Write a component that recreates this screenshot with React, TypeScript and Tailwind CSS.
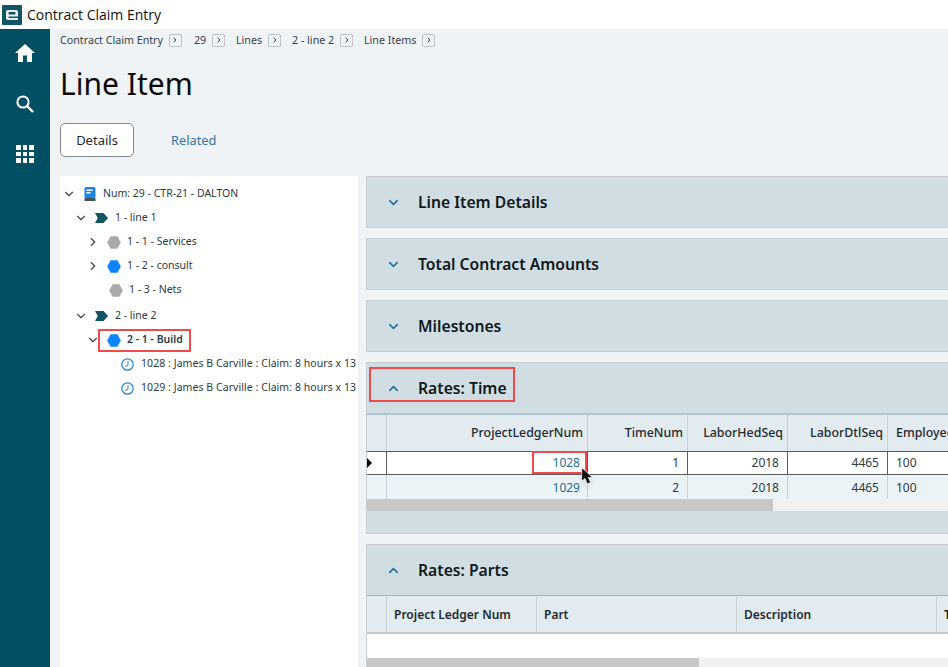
import React from "react";
import { ChevronDown, ChevronRight, ChevronUp } from "lucide-react";

const font = "font-['Noto_Sans','Open_Sans',sans-serif]";

const Crumb = ({ label, className }: { label: string; className: string }) => (
  <div className={`flex items-center ${className}`}>
    <span className="text-[10.7px] text-[#33424a] whitespace-nowrap">{label}</span>
    <span className="ml-[6px] w-[13px] h-[13px] border border-[#bcc4c8] rounded-[2px] flex items-center justify-center">
      <ChevronRight size={8} strokeWidth={3} className="text-[#33424a]" />
    </span>
  </div>
);

const Hexagon = ({ color, className = "" }: { color: string; className?: string }) => (
  <svg width="14" height="13" viewBox="0 0 14 13" className={`shrink-0 ${className}`}>
    <path d="M3.6 0.3 H10.4 L13.8 6.5 L10.4 12.7 H3.6 L0.2 6.5 Z" fill={color} />
  </svg>
);

const Tag = () => (
  <svg width="13" height="10" viewBox="0 0 13 10" className="shrink-0">
    <path d="M0 0 H8.5 L13 5 L8.5 10 H0 L2.8 5 Z" fill="#0f5564" />
  </svg>
);

const Clock = () => (
  <svg width="13" height="13" viewBox="0 0 13 13" className="shrink-0" fill="none" stroke="#1c86e3">
    <circle cx="6.5" cy="6.5" r="5.7" strokeWidth="1.2" />
    <path d="M7 3 V7 L4 8.6" strokeWidth="1" />
  </svg>
);

const Row = ({ pad, children, bold, className = "" }: { pad: number; children: React.ReactNode; bold?: boolean; className?: string }) => (
  <div
    className={`h-[24px] flex items-center text-[10.5px] text-[#2c3a42] whitespace-nowrap ${bold ? "font-semibold" : ""} ${className}`}
    style={{ paddingLeft: pad }}
  >
    {children}
  </div>
);

const PanelHeader = ({ title, open }: { title: string; open?: boolean }) => (
  <div className="h-[50px] flex items-center pl-[19px] bg-[#d0dde2]">
    {open ? (
      <ChevronUp size={15} strokeWidth={2.4} className="text-[#1c6f93] shrink-0" />
    ) : (
      <ChevronDown size={15} strokeWidth={2.4} className="text-[#1c6f93] shrink-0" />
    )}
    <span className="ml-[17px] pt-[2px] text-[15.7px] font-semibold text-[#10181c] whitespace-nowrap">{title}</span>
  </div>
);

const Collapsed = ({ title }: { title: string }) => (
  <div className="border border-[#c8ced2] mb-[10px]">
    <PanelHeader title={title} />
  </div>
);

const timeCols = "grid grid-cols-[20px_201px_100px_100px_100px_120px]";
const partCols = "grid grid-cols-[20px_150px_200px_200px_60px]";

const Scrollbar = ({ thumb }: { thumb: string }) => (
  <div className="h-[12px] bg-[#f1f1f1] flex">
    <div className={`h-full bg-[#c8c8c8] ${thumb}`} />
  </div>
);

const RatesTime = () => {
  const cell = "border-r border-[#c8d2d7] flex items-center justify-end";
  const head = `${cell} text-[12.4px] text-[#1f2a30] font-medium pr-[4px] bg-[#e2ebef]`;
  return (
    <div className="border border-[#c8ced2] mb-[10px] bg-[#d0dde2]">
      <div className="relative">
        <PanelHeader title="Rates: Time" open />
        <div className="absolute left-[2px] top-[4px] w-[146px] h-[35px] border-2 border-[#f04a4a]" />
      </div>
      <div className="border-t-2 border-[#b3c6cf]">
        <div className={`${timeCols} h-[36px]`}>
          <div className={head} />
          <div className={head}>ProjectLedgerNum</div>
          <div className={head}>TimeNum</div>
          <div className={head}>LaborHedSeq</div>
          <div className={head}>LaborDtlSeq</div>
          <div className="flex items-center pl-[8px] text-[12.4px] font-medium text-[#1f2a30] bg-[#e2ebef]">Employee</div>
        </div>
        <div className={`${timeCols} h-[24px] bg-white border-y border-[#5c5c5c] text-[12px] text-[#2c3a42]`}>
          <div className="flex items-center border-r border-[#5c5c5c]">
            <span className="w-0 h-0 border-y-[5px] border-y-transparent border-l-[5px] border-l-black" />
          </div>
          <div className="relative flex items-center justify-end pr-[7px] text-[#1c6f93] border-r border-[#5c5c5c]">
            1028
            <div className="absolute right-0 top-[-1px] w-[55px] h-[23px] border-2 border-[#f04a4a]" />
            <svg width="13" height="18" viewBox="0 0 12 17" className="absolute right-[-7px] top-[15px] z-10 drop-shadow-md">
              <path d="M0.5 0.5 V13.5 L3.6 10.8 L5.8 16 L9 14.6 L6.8 9.8 H10.8 Z" fill="#111" stroke="#fff" strokeWidth="0.7" />
            </svg>
          </div>
          <div className="flex items-center justify-end pr-[8px] border-r border-[#5c5c5c]">1</div>
          <div className="flex items-center justify-end pr-[8px] border-r border-[#5c5c5c]">2018</div>
          <div className="flex items-center justify-end pr-[8px] border-r border-[#5c5c5c]">4465</div>
          <div className="flex items-center pl-[8px]">100</div>
        </div>
        <div className={`${timeCols} h-[24px] bg-[#ecf3f6] text-[12px] text-[#2c3a42]`}>
          <div className="border-r border-[#c8d2d7]" />
          <div className="flex items-center justify-end pr-[7px] pt-[2px] text-[#1c6f93] border-r border-[#c8d2d7]">1029</div>
          <div className="flex items-center justify-end pr-[8px] pt-[2px] border-r border-[#c8d2d7]">2</div>
          <div className="flex items-center justify-end pr-[8px] pt-[2px] border-r border-[#c8d2d7]">2018</div>
          <div className="flex items-center justify-end pr-[8px] pt-[2px] border-r border-[#c8d2d7]">4465</div>
          <div className="flex items-center pl-[8px] pt-[2px]">100</div>
        </div>
        <Scrollbar thumb="w-[406px]" />
        <div className="h-[22px]" />
      </div>
    </div>
  );
};

const RatesParts = () => {
  const head = "border-r border-[#c8d2d7] flex items-center pl-[7px] pt-px text-[12px] font-semibold text-[#1f2a30] bg-[#e2ebef] whitespace-nowrap";
  return (
    <div className="border-l border-t border-[#c8ced2] bg-[#d0dde2]">
      <PanelHeader title="Rates: Parts" open />
      <div className="border-t border-[#8fbcc8]">
        <div className={`${partCols} h-[38px] border-b-2 border-[#c4c9cc]`}>
          <div className={head} />
          <div className={head}>Project Ledger Num</div>
          <div className={head}>Part</div>
          <div className={head}>Description</div>
          <div className={head}>Type</div>
        </div>
        <div className="h-[24px] bg-white" />
        <Scrollbar thumb="w-[332px]" />
      </div>
    </div>
  );
};

export default function App() {
  return (
    <div className={`w-[948px] h-[667px] overflow-hidden flex flex-col bg-[#eff3f6] ${font}`}>
      <header className="h-[29px] shrink-0 bg-white flex items-center pl-[2px]">
        <svg width="20" height="20" viewBox="0 0 20 20" className="shrink-0">
          <rect width="20" height="20" rx="1" fill="#0f5564" />
          <path
            d="M4 7 Q4 5 6 5 H14 Q16 5 16 7 V11.4 H6.6 V13 H16 V15 H6 Q4 15 4 13 Z M6.6 7 V9.6 H13.4 V7 Z"
            fill="#e8f0f2"
            fillRule="evenodd"
          />
        </svg>
        <span className="ml-[5px] text-[14px] text-[#111] font-['Open_Sans',sans-serif]">Contract Claim Entry</span>
      </header>
      <div className="flex flex-1 min-h-0">
        <aside className="w-[50px] shrink-0 bg-[#004f62] flex flex-col items-center pt-[15px] text-white">
          <svg width="20" height="18" viewBox="0 0 20 18" fill="#fff">
            <path d="M10 0 L20 9 H17 V18 H12 V11.5 H8 V18 H3 V9 H0 Z" />
          </svg>
          <svg width="18" height="18" viewBox="0 0 18 18" fill="none" stroke="#fff" className="mt-[33px]">
            <circle cx="7" cy="7" r="5.6" strokeWidth="2" />
            <path d="M11 11 L17 17" strokeWidth="2.4" />
          </svg>
          <div className="mt-[32px] grid grid-cols-3 gap-[2px]">
            {Array.from({ length: 9 }).map((_, i) => (
              <span key={i} className="w-[4.5px] h-[4.5px] bg-white" />
            ))}
          </div>
        </aside>
        <main className="flex-1 min-w-0 pl-[10px]">
          <div className="h-[23px] flex items-center">
            <Crumb label="Contract Claim Entry" className="w-[134px]" />
            <Crumb label="29" className="w-[42px]" />
            <Crumb label="Lines" className="w-[56px]" />
            <Crumb label="2 - line 2" className="w-[72px]" />
            <Crumb label="Line Items" className="" />
          </div>
          <h1 className="mt-[9px] text-[30px] leading-[46px] text-[#0b0b0b]">Line Item</h1>
          <div className="mt-[16px] flex items-center h-[34px]">
            <div className="w-[74px] h-[34px] pt-px bg-white border border-[#83898c] rounded-[5px] flex items-center justify-center text-[13px] text-[#1f2a30]">
              Details
            </div>
            <span className="ml-[37px] pt-[2px] text-[12.8px] text-[#2f76a3]">Related</span>
          </div>
          <div className="mt-[19px] flex items-start gap-[8px]">
            <nav className="w-[298px] h-[491px] shrink-0 bg-white pt-[6px] overflow-hidden">
              <Row pad={2}>
                <ChevronDown size={14} strokeWidth={2} className="text-[#444]" />
                <svg width="12" height="14" viewBox="0 0 12 14" className="ml-[8px] shrink-0">
                  <rect x="0.5" width="11" height="11" rx="1.5" fill="#1c86e3" />
                  <rect x="2.5" y="2.5" width="6" height="1.5" fill="#fff" />
                  <rect x="2.5" y="5" width="4" height="1.5" fill="#fff" />
                  <rect x="0.5" y="11" width="11" height="3" rx="0.5" fill="#44525a" />
                </svg>
                <span className="ml-[7px]">Num: 29 - CTR-21 - DALTON</span>
              </Row>
              <Row pad={14}>
                <ChevronDown size={14} strokeWidth={2} className="text-[#444]" />
                <span className="ml-[7px]"><Tag /></span>
                <span className="ml-[7px]">1 - line 1</span>
              </Row>
              <Row pad={26}>
                <ChevronRight size={14} strokeWidth={2} className="text-[#444]" />
                <Hexagon color="#a9a9a9" className="ml-[7px]" />
                <span className="ml-[6px]">1 - 1 - Services</span>
              </Row>
              <Row pad={26}>
                <ChevronRight size={14} strokeWidth={2} className="text-[#444]" />
                <Hexagon color="#0a84ff" className="ml-[7px]" />
                <span className="ml-[6px]">1 - 2 - consult</span>
              </Row>
              <Row pad={49}>
                <Hexagon color="#a9a9a9" />
                <span className="ml-[6px]">1 - 3 - Nets</span>
              </Row>
              <Row pad={14} className="mt-[2px]">
                <ChevronDown size={14} strokeWidth={2} className="text-[#444]" />
                <span className="ml-[7px]"><Tag /></span>
                <span className="ml-[7px]">2 - line 2</span>
              </Row>
              <Row pad={26} bold>
                <ChevronDown size={14} strokeWidth={2} className="text-[#444]" />
                <div className="ml-[-2px] h-[23px] w-[93px] border-2 border-[#f04a4a] flex items-center pl-[7px]">
                  <Hexagon color="#0a84ff" />
                  <span className="ml-[6px]">2 - 1 - Build</span>
                </div>
              </Row>
              <Row pad={61}>
                <Clock />
                <span className="ml-[7px] tracking-[0.06px]">1028 : James B Carville : Claim: 8 hours x 13</span>
              </Row>
              <Row pad={61}>
                <Clock />
                <span className="ml-[7px] tracking-[0.06px]">1029 : James B Carville : Claim: 8 hours x 13</span>
              </Row>
            </nav>
            <section className="w-[640px] shrink-0">
              <Collapsed title="Line Item Details" />
              <Collapsed title="Total Contract Amounts" />
              <Collapsed title="Milestones" />
              <RatesTime />
              <RatesParts />
            </section>
          </div>
        </main>
      </div>
    </div>
  );
}
